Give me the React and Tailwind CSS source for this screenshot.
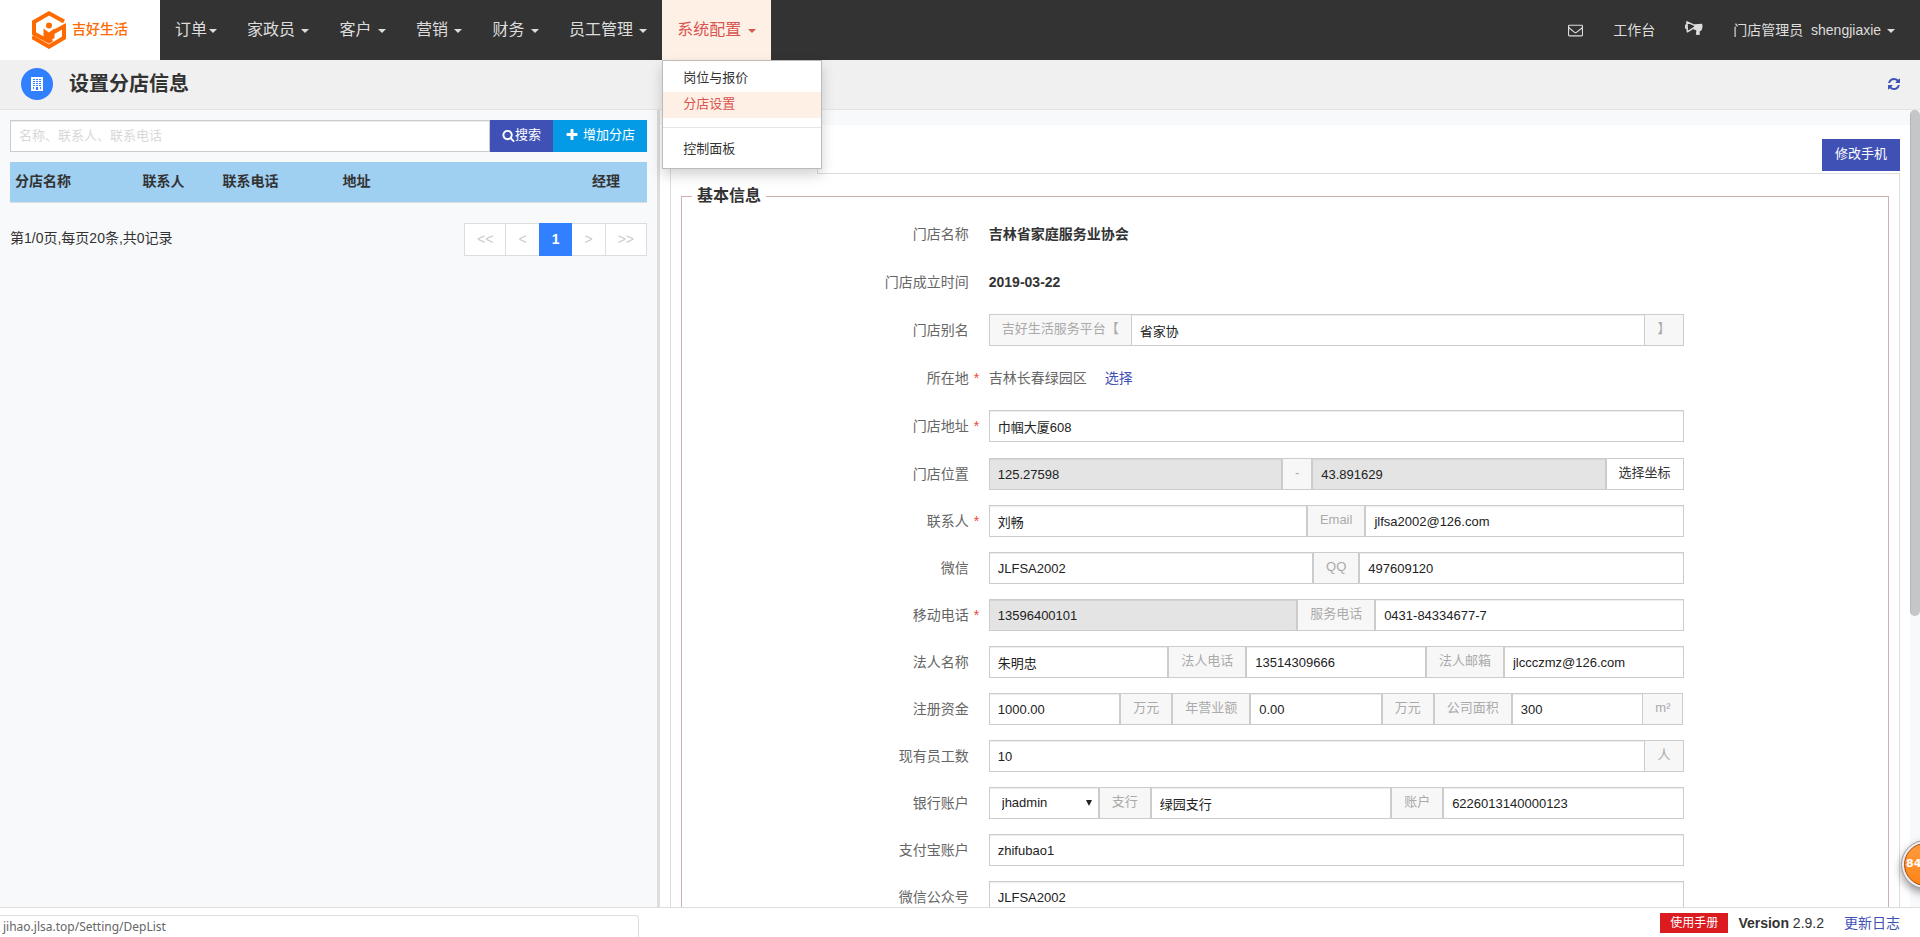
const NAV_ITEMS = ["家政员", "客户", "营销", "财务", "员工管理"];

const BRANCH_COLUMNS = [
  { title: "分店名称", width: "w-1/5" },
  { title: "联系人", width: "w-[80px]" },
  { title: "联系电话", width: "w-[120px]" },
  { title: "地址", width: "" },
  { title: "经理", width: "w-[60px]" },
];

const ICONS = {
  search:
    "M1216 832q0-185-131.5-316.5t-316.5-131.5-316.5 131.5-131.5 316.5 131.5 316.5 316.5 131.5 316.5-131.5 131.5-316.5zm512 832q0 52-38 90t-90 38q-54 0-90-38l-343-342q-179 124-399 124-143 0-273.5-55.5t-225-150-150-225-55.5-273.5 55.5-273.5 150-225 225-150 273.5-55.5 273.5 55.5 225 150 150 225 55.5 273.5q0 220-124 399l343 343q37 37 37 90z",
  plus: "M1600 736v192q0 40-28 68t-68 28h-416v416q0 40-28 68t-68 28h-192q-40 0-68-28t-28-68v-416h-416q-40 0-68-28t-28-68v-192q0-40 28-68t68-28h416v-416q0-40 28-68t68-28h192q40 0 68 28t28 68v416h416q40 0 68 28t28 68z",
  envelope:
    "M1664 1504v-768q-32 36-69 66-268 206-426 338-51 43-83 67t-86.5 48.5-102.5 24.5h-2q-48 0-102.5-24.5t-86.5-48.5-83-67q-158-132-426-338-37-30-69-66v768q0 13 9.5 22.5t22.5 9.5h1472q13 0 22.5-9.5t9.5-22.5zm0-1051v-24.5l-.5-13-3-12.5-5.5-9-9-7.5-14-2.5h-1472q-13 0-22.5 9.5t-9.5 22.5q0 168 147 284 193 152 401 317 6 5 35 29.5t46 37.5 44.5 31.5 50.5 27.5 43 9h2q20 0 43-9t50.5-27.5 44.5-31.5 46-37.5 35-29.5q208-165 401-317 54-43 100.5-115.5t46.5-131.5zm128-37v1088q0 66-47 113t-113 47h-1472q-66 0-113-47t-47-113v-1088q0-66 47-113t113-47h1472q66 0 113 47t47 113z",
  refresh:
    "M1639 1056q0 5-1 7-64 268-268 434.5t-478 166.5q-146 0-282.5-55t-243.5-157l-129 129q-19 19-45 19t-45-19-19-45v-448q0-26 19-45t45-19h448q26 0 45 19t19 45-19 45l-137 137q71 66 161 102t187 36q134 0 250-65t186-179q11-17 53-117 8-23 30-23h192q13 0 22.5 9.5t9.5 22.5zm25-800v448q0 26-19 45t-45 19h-448q-26 0-45-19t-19-45 19-45l138-138q-148-137-349-137-134 0-250 65t-186 179q-11 17-53 117-8 23-30 23h-199q-13 0-22.5-9.5t-9.5-22.5v-7q65-268 270-434.5t480-166.5q146 0 284 55.5t245 156.5l130-129q19-19 45-19t45 19 19 45z",
};

function Icon({ name, className }) {
  return (
    <svg viewBox="0 0 1792 1792" fill="currentColor" aria-hidden="true" className={className}>
      <path d={ICONS[name]} />
    </svg>
  );
}

function Caret() {
  return (
    <span className="ml-0.5 inline-block border-x-4 border-t-4 border-x-transparent border-t-current align-middle" />
  );
}

function Logo() {
  return (
    <a href="#home" className="flex w-40 shrink-0 items-center bg-white pl-8 text-[#ff6a00]">
      <svg viewBox="0 0 34 38" className="h-[38px] w-[34px]" fill="none" aria-hidden="true">
        <path d="M32 10.5L17 2.3L2 11V22.5L17 30.5L20 28.5" stroke="currentColor" strokeWidth="4" />
        <path d="M19 22.5L32 15.3V26.8L17 35.7L0 26" stroke="currentColor" strokeWidth="4" />
        <circle cx="17" cy="14.5" r="3" fill="currentColor" />
        <path d="M11.5 17.5L17 21.5L22.5 17.5V27L17 30.5L11.5 27Z" fill="currentColor" />
        <path d="M14.5 17.5L17 20L19.5 17.5" stroke="#fff" strokeWidth="1" />
      </svg>
      <span className="ml-1.5 pb-0.5 text-sm font-medium">吉好生活</span>
    </a>
  );
}

function NavBar() {
  return (
    <header className="relative z-20 flex h-15 shrink-0 bg-[#333] text-[#ddd]">
      <Logo />
      <nav className="flex whitespace-nowrap text-base">
        <button className="px-[15px]">
          订单
          <Caret />
        </button>
        {NAV_ITEMS.map((item) => (
          <button key={item} className="px-[15px]">
            {item} <Caret />
          </button>
        ))}
        <div className="relative flex">
          <button className="bg-[#fff0e6] px-[15px] text-[#d9534f]">
            系统配置 <Caret />
          </button>
          <SettingMenu />
        </div>
      </nav>
      <div className="ml-auto flex items-center whitespace-nowrap pr-2.5 text-sm">
        <button aria-label="消息" className="px-[15px]">
          <Icon name="envelope" className="h-4 w-[15px]" />
        </button>
        <a href="#desk" className="px-[15px]">工作台</a>
        <button aria-label="公告" className="px-[15px] pb-1">
          <svg viewBox="0 0 19 16" className="h-4 w-[18px]" fill="none" aria-hidden="true">
            <path d="M2 1.5L12 6L2.5 12Z" stroke="currentColor" strokeWidth="1.6" strokeLinejoin="round" />
            <path d="M0 4.5L2 4V9L0 8.5Z" fill="currentColor" />
            <path d="M10 4L18 3.5C19 5.5 18.5 9 17 11L15.5 11.5V15.5L11.5 15L12 10.5L9 9.5Z" fill="currentColor" />
          </svg>
        </button>
        <button className="px-[15px]">
          门店管理员 <span className="ml-1">shengjiaxie</span> <Caret />
        </button>
      </div>
    </header>
  );
}

function SettingMenu() {
  return (
    <div className="absolute left-0 top-full w-40 border border-[#bbb] bg-white py-[5px] text-[13px] leading-[18px] text-[#333] shadow-[0_6px_12px_rgba(0,0,0,0.175)]">
      <a href="#price" className="block px-5 pb-[5px] pt-[3px]">岗位与报价</a>
      <a href="#branch" className="block bg-[#fff0e6] px-5 pb-[5px] pt-[3px] text-[#d9534f]">分店设置</a>
      <hr className="my-[9px] border-[#e5e5e5]" />
      <a href="#panel" className="block px-5 pb-[5px] pt-[3px]">控制面板</a>
    </div>
  );
}

function PageHeader() {
  return (
    <div className="flex h-[50px] shrink-0 items-center border-b border-[#e4e4e4] bg-[#f0f0f0] pl-[21px] pr-[19px]">
      <span className="mb-px flex size-8 items-center justify-center rounded-full bg-[#3080ff]">
        <svg viewBox="0 0 12 14" className="h-3.5 w-3" aria-hidden="true">
          <path d="M0 0H12V14H0Z" fill="#fff" />
          <path
            d="M2 2h2v1H2zM5 2h2v1H5zM8 2h2v1H8zM2 4h2v1H2zM5 4h2v1H5zM8 4h2v1H8zM2 6h2v1H2zM5 6h2v1H5zM8 6h2v1H8zM2 8h2v1H2zM5 8h2v1H5zM8 8h2v1H8zM2 10h1v2H2zM5 10h2v3H5zM9 10h1v2H9z"
            fill="#3080ff"
          />
        </svg>
      </span>
      <h1 className="ml-4 pb-0.5 text-xl font-bold text-[#333]">设置分店信息</h1>
      <button aria-label="刷新" className="ml-auto pb-0.5 text-[#3f51b5]">
        <Icon name="refresh" className="size-3.5" />
      </button>
    </div>
  );
}

const PAGE_BUTTON = "border-y border-r border-[#ddd] px-3";

function BranchList() {
  return (
    <section className="flex w-[660px] shrink-0 flex-col border-r-[3px] border-[#ddd] bg-[#f8f9fb] p-2.5">
      <form className="flex h-8 text-[13px]">
        <input
          type="text"
          aria-label="搜索分店"
          placeholder="名称、联系人、联系电话"
          className="min-w-0 flex-1 border border-[#ccc] bg-white px-2 shadow-[inset_0_1px_1px_rgba(0,0,0,0.075)] placeholder:text-[#d8d8d8]"
        />
        <button type="button" className="flex items-center bg-[#3f51b5] px-3 pb-0.5 text-white">
          <Icon name="search" className="size-[13px]" />
          搜索
        </button>
        <button type="button" className="flex items-center gap-1 bg-[#039be5] px-3 pb-0.5 text-white">
          <Icon name="plus" className="size-3.5" />
          增加分店
        </button>
      </form>

      <table className="mt-2.5 w-full table-fixed text-left text-sm text-[#333]">
        <thead>
          <tr className="h-10 border-b border-[#ddd] bg-[#9fcff1]">
            {BRANCH_COLUMNS.map((column) => (
              <th key={column.title} className={`${column.width} px-[5px] pb-0.5 font-bold`}>
                {column.title}
              </th>
            ))}
          </tr>
        </thead>
      </table>

      <div className="mt-5 flex items-start justify-between text-sm text-[#333]">
        <p className="pt-[5px]">第1/0页,每页20条,共0记录</p>
        <div className="flex h-[33px] border-l border-[#ddd] bg-white text-[#ccc]">
          <button className={PAGE_BUTTON}>&lt;&lt;</button>
          <button className={PAGE_BUTTON}>&lt;</button>
          <button className="-ml-px bg-[#3080ff] px-[13px] font-bold text-white">1</button>
          <button className={PAGE_BUTTON}>&gt;</button>
          <button className={PAGE_BUTTON}>&gt;&gt;</button>
        </div>
      </div>
    </section>
  );
}

function Row({ label, htmlFor, required, tall, children }) {
  return (
    <div className={`grid grid-cols-12 ${tall ? "h-[33px]" : "h-8"}`}>
      <label htmlFor={htmlFor} className="col-span-3 flex justify-end pt-1.5 text-sm leading-5 text-[#666]">
        {label}
        <span className="w-5 pl-[5px] text-[#f44336]">{required ? "*" : ""}</span>
      </label>
      <div className="col-span-7 flex h-8 text-[13px]">{children}</div>
    </div>
  );
}

function Field({ id, label, value, readOnly }) {
  return (
    <input
      id={id}
      type="text"
      aria-label={label}
      defaultValue={value}
      readOnly={readOnly}
      className={`h-8 w-0 min-w-0 flex-1 border border-[#ccc] px-2 text-[#222] shadow-[inset_0_1px_1px_rgba(0,0,0,0.075)] ${
        readOnly ? "bg-[#e4e4e4]" : "bg-white"
      }`}
    />
  );
}

function Addon({ children }) {
  return (
    <span className="flex h-8 items-center whitespace-nowrap border border-[#ccc] bg-[#f7f7f7] px-3 pb-0.5 text-[#aaa] first:border-r-0 last:border-l-0">
      {children}
    </span>
  );
}

function BasicInfo() {
  return (
    <fieldset className="mx-2.5 mb-5 border border-[#cfb0b0] pb-5 pl-[9px] pr-[6px]">
      <legend className="ml-px px-[5px] text-base font-bold leading-6 text-[#333]">基本信息</legend>
      <div className="flex flex-col gap-[15px] pt-2.5">
        <Row label="门店名称" tall>
          <strong className="pt-1.5 text-sm leading-5 text-[#333]">吉林省家庭服务业协会</strong>
        </Row>
        <Row label="门店成立时间" tall>
          <strong className="pt-1.5 text-sm leading-5 text-[#333]">2019-03-22</strong>
        </Row>
        <Row label="门店别名" htmlFor="alias" tall>
          <Addon>吉好生活服务平台【</Addon>
          <Field id="alias" value="省家协" />
          <Addon>】</Addon>
        </Row>
        <Row label="所在地" required tall>
          <span className="pt-1.5 text-sm leading-5 text-[#666]">吉林长春绿园区</span>
          <a href="#area" className="ml-[18px] pt-1.5 text-sm leading-5 text-[#3f51b5]">选择</a>
        </Row>
        <Row label="门店地址" htmlFor="address" required tall>
          <Field id="address" value="巾帼大厦608" />
        </Row>
        <Row label="门店位置" htmlFor="longitude">
          <Field id="longitude" value="125.27598" readOnly />
          <Addon>-</Addon>
          <Field label="纬度" value="43.891629" readOnly />
          <button type="button" className="whitespace-nowrap border border-[#ccc] bg-white px-3 pb-0.5 text-[#333]">
            选择坐标
          </button>
        </Row>
        <Row label="联系人" htmlFor="contact" required>
          <Field id="contact" value="刘畅" />
          <Addon>Email</Addon>
          <Field label="Email" value="jlfsa2002@126.com" />
        </Row>
        <Row label="微信" htmlFor="wechat">
          <Field id="wechat" value="JLFSA2002" />
          <Addon>QQ</Addon>
          <Field label="QQ" value="497609120" />
        </Row>
        <Row label="移动电话" htmlFor="mobile" required>
          <Field id="mobile" value="13596400101" readOnly />
          <Addon>服务电话</Addon>
          <Field label="服务电话" value="0431-84334677-7" />
        </Row>
        <Row label="法人名称" htmlFor="legal">
          <Field id="legal" value="朱明忠" />
          <Addon>法人电话</Addon>
          <Field label="法人电话" value="13514309666" />
          <Addon>法人邮箱</Addon>
          <Field label="法人邮箱" value="jlccczmz@126.com" />
        </Row>
        <Row label="注册资金" htmlFor="capital">
          <Field id="capital" value="1000.00" />
          <Addon>万元</Addon>
          <Addon>年营业额</Addon>
          <Field label="年营业额" value="0.00" />
          <Addon>万元</Addon>
          <Addon>公司面积</Addon>
          <Field label="公司面积" value="300" />
          <Addon>m²</Addon>
        </Row>
        <Row label="现有员工数" htmlFor="staff">
          <Field id="staff" value="10" />
          <Addon>人</Addon>
        </Row>
        <Row label="银行账户" htmlFor="bank">
          <div className="relative w-[110px] shrink-0">
            <select
              id="bank"
              className="h-8 w-full appearance-none border border-[#ccc] bg-white px-3 text-[#222] shadow-[inset_0_1px_1px_rgba(0,0,0,0.075)]"
            >
              <option>jhadmin</option>
            </select>
            <svg
              viewBox="0 0 6 6"
              className="pointer-events-none absolute right-[7px] top-[13px] size-1.5 text-[#222]"
              aria-hidden="true"
            >
              <path d="M0 0H6L3 6Z" fill="currentColor" />
            </svg>
          </div>
          <Addon>支行</Addon>
          <Field label="支行" value="绿园支行" />
          <Addon>账户</Addon>
          <Field label="账户" value="6226013140000123" />
        </Row>
        <Row label="支付宝账户" htmlFor="alipay">
          <Field id="alipay" value="zhifubao1" />
        </Row>
        <Row label="微信公众号" htmlFor="official">
          <Field id="official" value="JLFSA2002" />
        </Row>
      </div>
    </fieldset>
  );
}

function DetailPanel() {
  return (
    <section className="flex min-w-0 flex-1 overflow-hidden bg-[#f8f9fb] pt-[15px]">
      <div className="min-w-0 flex-1 bg-white px-2.5">
        <div className="flex h-[49px] items-end">
          <div className="h-8 w-[148px] border-x border-t border-[#ddd]" />
          <div className="flex h-full flex-1 items-start justify-end border-b border-[#ddd] pt-3.5">
            <button className="h-8 bg-[#3f51b5] px-[13px] pb-0.5 text-[13px] text-white">修改手机</button>
          </div>
        </div>
        <div className="border-x border-[#ddd] pt-2.5">
          <BasicInfo />
        </div>
      </div>
      {/* scrollbar */}
      <div className="-mt-[15px] w-2.5 shrink-0">
        <div className="h-[506px] rounded-full border-l border-[#b5b6b8] bg-[#c5c6c8]" />
      </div>
    </section>
  );
}

function Footer() {
  return (
    <footer className="relative flex h-[30px] shrink-0 items-start justify-end border-t border-[#ddd] bg-white pr-5 text-sm text-[#333]">
      <div className="absolute bottom-0 left-0 h-[22px] w-[639px] rounded-tr border-r border-t border-[#ddd] bg-white pl-[3px] font-['Noto_Sans',sans-serif] text-xs leading-[22px] text-[#666]">
        jihao.jlsa.top/Setting/DepList
      </div>
      <a href="#manual" className="mt-[5px] h-5 bg-[#db1b20] px-2.5 text-xs leading-5 text-white">
        使用手册
      </a>
      <p className="ml-2.5 mt-[5px] leading-5">
        <b>Version</b> 2.9.2
      </p>
      <a href="#changelog" className="ml-5 mt-[5px] leading-5 text-[#3f51b5]">更新日志</a>
    </footer>
  );
}

export default function App() {
  return (
    <div className="relative flex h-screen flex-col overflow-hidden bg-white font-['Liberation_Sans','Noto_Sans_CJK_SC',sans-serif]">
      <NavBar />
      <PageHeader />
      <main className="flex min-h-0 flex-1">
        <BranchList />
        <DetailPanel />
      </main>
      <Footer />
      <div className="absolute -right-[30px] bottom-12 z-30 flex size-[49px] items-center rounded-full border border-[#999] bg-[#eee] p-0.5 shadow-[0_4px_8px_rgba(0,0,0,0.4)]">
        <span className="flex size-full items-center rounded-full border border-[#a8480c] bg-linear-to-b from-[#ff9a3c] to-[#ff8410] pl-px font-['DejaVu_Sans',sans-serif] text-[11px] font-bold text-white">
          84
        </span>
      </div>
    </div>
  );
}
